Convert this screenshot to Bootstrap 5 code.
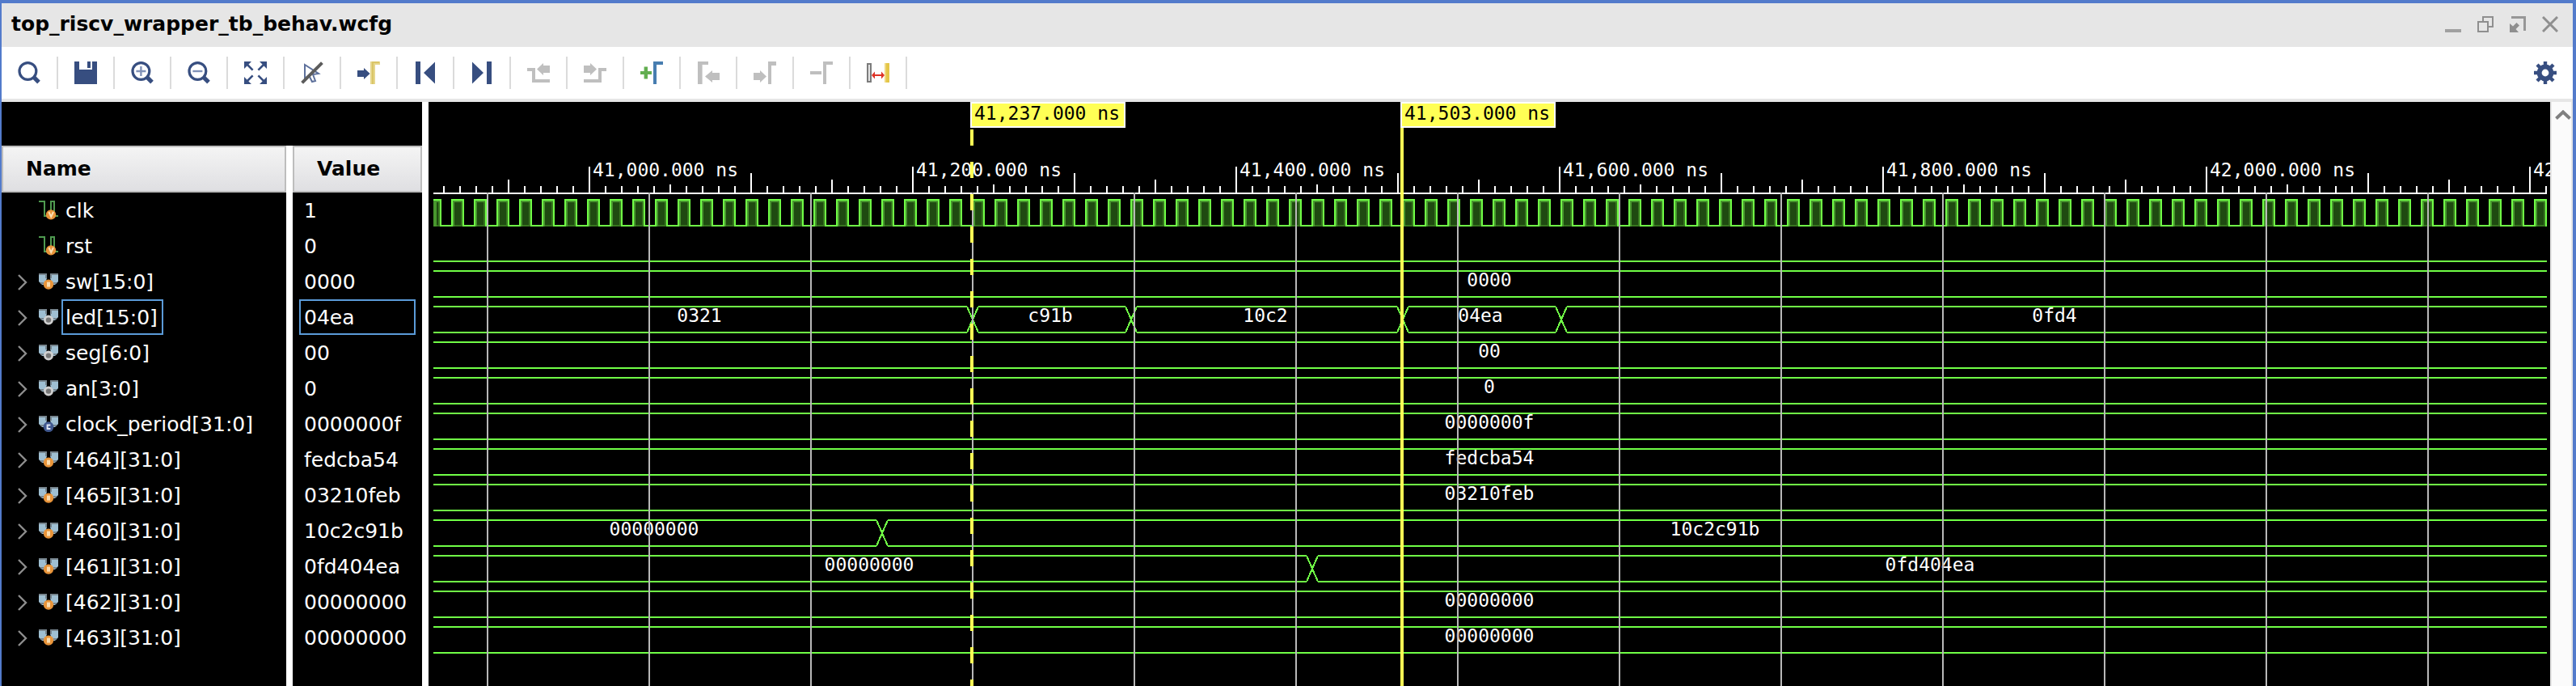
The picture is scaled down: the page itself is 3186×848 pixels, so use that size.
<!DOCTYPE html>
<html lang="en">
<head>
<meta charset="utf-8">
<meta name="viewport" content="width=device-width, initial-scale=1">
<title>top_riscv_wrapper_tb_behav.wcfg</title>
<link rel="stylesheet" href="https://cdn.jsdelivr.net/npm/bootstrap@5.3.0/dist/css/bootstrap.min.css">
<style>
  :root { --navy: #374e80; --frame: #537bcb; --chrome: #e6e6e6; }
  body { font-family: "DejaVu Sans", sans-serif; font-size: 25px; color: #000; background: #000; }
  .window-frame { border: solid var(--frame); border-width: 4px 4px 0 2px; }
  .title-strip { height: 54px; padding: 0 18px 2px 12px; background: var(--chrome); }
  .title-strip h1 { font-size: 25px; font-weight: 700; line-height: 52px; }
  .title-tools { gap: 20px; }
  button { border: 0; background: none; padding: 0; display: block; }
  button svg { display: block; }
  .title-tools svg { width: 20px; height: 20px; }
  .tool-strip { height: 68px; background: #fff; border-bottom: 4px solid var(--chrome); }
  .tool-cell { width: 70px; height: 40px; padding: 6px 20px; border-right: 2px solid #dbdbdb; }
  .tool-strip svg { width: 28px; height: 28px; }
  .settings { margin-right: 20px; }
  .signal-panel { width: 528px; padding-top: 54px; background: #000; border-right: 8px solid #fff; }
  .signal-body { background: linear-gradient(90deg, #000 352px, #fff 352px, #fff 360px, #000 360px); }
  .signal-table { width: 520px; table-layout: fixed; border-collapse: separate; border-spacing: 0; color: #fff; }
  .signal-table th, .signal-table td { padding: 0; }
  .signal-table thead th { height: 58px; padding: 0 28px; line-height: 54px; color: #000; border: 2px solid #bdbdbd;
    background: linear-gradient(#f4f4f4, #dfdfe2); }
  .signal-table thead td { background: #fff; }
  .signal-table tbody th { font-weight: 400; }
  .name-cell { height: 44px; }
  .twisty { width: 46px; height: 44px; padding-left: 20px; }
  .twisty svg { width: 12px; height: 44px; }
  .kind { width: 24px; height: 24px; margin-right: 4px; }
  .label-box { height: 44px; line-height: 38px; padding: 2px 5px 0 3px; border: 2px solid transparent; }
  .value-box { margin: 0 8px; padding-left: 4px; }
  .chosen .label-box { border-color: #5b9bd8; }
  .wave-panel { min-width: 0; min-height: 720px; background: #000; }
  .wave-panel svg { display: block; }
  .wave-panel text { font-family: "DejaVu Sans Mono", monospace; font-size: 23px; fill: #fff; }
  .wave-panel text.flag { fill: #000; }
  .scroll-track { width: 28px; padding: 10px 2px 0 4px; background: #fbfbfb; border: solid var(--chrome); border-width: 0 2px; }
  .scroll-track svg { width: 20px; height: 12px; }
</style>
</head>
<body>
<svg class="d-none" aria-hidden="true">
  <symbol id="k-net" viewBox="0 0 12 12">
    <path d="M0 .5H3.5V9.5H7.5V.5H9.5V9.5H12" fill="none" stroke="#4f9a50"/>
    <circle cx="7.5" cy="8.7" r="3.1" fill="#e8943a"/><path d="M6.2 7l1.4 3 1.4-3" fill="none" stroke="#fbe0b4"/>
  </symbol>
  <symbol id="k-wings" viewBox="0 0 12 12">
    <path d="M0 1H5V4L3.5 8H2L0 6Z M7 1H12V6L10 8H8.500L7 4Z" fill="#9fbfd2"/>
    <path d="M0 1.500H4.500V4 M12 1.500H7.500V4 M1 7H3 M9 7H11" fill="none" stroke="#77858e"/>
  </symbol>
  <symbol id="k-in" viewBox="0 0 12 12"><use href="#k-wings"/><circle cx="6" cy="7.800" r="3.100" fill="#e8943a"/><rect x="5" y="6.300" width="2" height="3" fill="#fbdcae"/></symbol>
  <symbol id="k-out" viewBox="0 0 12 12"><use href="#k-wings"/><circle cx="6" cy="7.800" r="2.300" fill="#777" stroke="#cfcfcf" stroke-width="1.400"/></symbol>
  <symbol id="k-const" viewBox="0 0 12 12"><use href="#k-wings"/><circle cx="6" cy="7.800" r="3.200" fill="#40588f"/><path d="M7.200 6.700H5.300V9H7.200" fill="none" stroke="#dfe6f5"/></symbol>
  <symbol id="chev" viewBox="0 0 12 44"><path d="M1 14l9 9-9 9" fill="none" stroke="#8d8d8d" stroke-width="2.400"/></symbol>
  <symbol id="lens" viewBox="0 0 14 14"><circle cx="6.200" cy="6" r="5.200" fill="none" stroke="#374e80" stroke-width="1.600"/><path d="M10 9.800l3 3" stroke="#374e80" stroke-width="2.600"/></symbol>
</svg>

<main class="window-frame d-flex flex-column min-vh-100">
  <header class="title-strip d-flex align-items-center">
    <h1 class="m-0 flex-grow-1">top_riscv_wrapper_tb_behav.wcfg</h1>
    <div class="title-tools d-flex">
      <button aria-label="Minimize"><svg viewBox="0 0 20 20"><path d="M0 18H20" stroke="#a0a0a0" stroke-width="4"/></svg></button>
      <button aria-label="Restore"><svg viewBox="0 0 20 20" fill="none" stroke="#8f8f8f" stroke-width="2"><path d="M7 6V1H19V13H14"/><rect x="1" y="7" width="12" height="12"/></svg></button>
      <button aria-label="Float"><svg viewBox="0 0 20 20"><path d="M2 1.500H18.500V18" fill="none" stroke="#979797" stroke-width="3"/><path d="M0 9V20H11L7.500 16 12 11.500 8.500 8 4 12.500Z" fill="#8f8f8f"/></svg></button>
      <button aria-label="Close"><svg viewBox="0 0 20 20"><path d="M1 1l18 18M19 1L1 19" stroke="#8f8f8f" stroke-width="3"/></svg></button>
    </div>
  </header>

  <nav class="tool-strip d-flex align-items-center" aria-label="Waveform tools">
    <button class="tool-cell" aria-label="Find"><svg><use href="#lens"/></svg></button>
    <button class="tool-cell" aria-label="Save"><svg viewBox="0 0 14 14" shape-rendering="crispEdges"><path d="M0 0H3V5H11V0H14V14H0ZM8 0H10V4H8Z" fill="#374e80"/></svg></button>
    <button class="tool-cell" aria-label="Zoom in"><svg viewBox="0 0 14 14"><use href="#lens"/><path d="M3.200 6H9.200M6.200 3V9" stroke="#8192b8" stroke-width="1.200"/></svg></button>
    <button class="tool-cell" aria-label="Zoom out"><svg viewBox="0 0 14 14"><use href="#lens"/><path d="M3.200 6H9.200" stroke="#8192b8" stroke-width="1.200"/></svg></button>
    <button class="tool-cell" aria-label="Zoom fit"><svg viewBox="0 0 14 14" fill="#374e80" stroke="#374e80"><path stroke="none" d="M0 0H4.500L0 4.500ZM14 0V4.500L9.500 0ZM0 14V9.500L4.500 14ZM14 14H9.500L14 9.500Z"/><path stroke-width="1.300" d="M1 1L5.300 5.300M13 1L8.700 5.300M1 13L5.300 8.700M13 13L8.700 8.700"/></svg></button>
    <button class="tool-cell" aria-label="Selection off"><svg viewBox="0 0 14 14"><path d="M2.500 2V10.500L5 8.500 7 12.500 9 12 7.500 8 11 7.500Z" fill="none" stroke="#5d709b"/><path d="M.800 13.200L13.200.800" stroke="#5c5c5c" stroke-width="2"/></svg></button>
    <button class="tool-cell" aria-label="Go to cursor"><svg viewBox="0 0 14 14"><path d="M0 5.500H4V4L7.800 7.500 4 11V9.500H0Z" fill="#374e80"/><path d="M8 0H14V2H11V14H8Z" fill="#e6d68c"/><path d="M9 0H13.500V1H10V14H9Z" fill="#dac566"/></svg></button>
    <button class="tool-cell" aria-label="Go to time 0"><svg viewBox="0 0 14 14" fill="#374e80"><path d="M1 0H4V14H1ZM13 .300V13.700L6 7Z"/></svg></button>
    <button class="tool-cell" aria-label="Go to last time"><svg viewBox="0 0 14 14" fill="#374e80"><path d="M10 0H13V14H10ZM1 .300V13.700L8 7Z"/></svg></button>
    <button class="tool-cell" aria-label="Previous transition" disabled><svg viewBox="0 0 14 14" fill="#bfbfbf"><path d="M0 4H5V11H14V13H3V6H0ZM14 2.500V7H10V8.500L6 4.800 10 1V2.500Z"/></svg></button>
    <button class="tool-cell" aria-label="Next transition" disabled><svg viewBox="0 0 14 14" fill="#bfbfbf"><path d="M14 4H9V11H0V13H11V6H14ZM0 2.500V7H4V8.500L8 4.800 4 1V2.500Z"/></svg></button>
    <button class="tool-cell" aria-label="Add marker"><svg viewBox="0 0 14 14"><path d="M0 6H2.300V3.300H4.500V6H7V8H4.500V10.700H2.300V8H0Z" fill="#62ae50"/><path d="M8 0H14V2H10V14H8Z" fill="#477db0"/></svg></button>
    <button class="tool-cell" aria-label="Previous marker" disabled><svg viewBox="0 0 14 14" fill="#bfbfbf"><path d="M.500 0H7V2H3.300V14H.500ZM14 7V11.500H9.500V13L5 9.300 9.500 5.500V7Z"/></svg></button>
    <button class="tool-cell" aria-label="Next marker" disabled><svg viewBox="0 0 14 14" fill="#bfbfbf"><path d="M14 0H9V14H11V2.500H14ZM0 7V11.500H4V13L8 9.300 4 5.500V7Z"/></svg></button>
    <button class="tool-cell" aria-label="Delete marker" disabled><svg viewBox="0 0 14 14" fill="#bfbfbf"><path d="M0 6H7V8H0ZM8 0H14V2H10V14H8Z"/></svg></button>
    <button class="tool-cell" aria-label="Measure"><svg viewBox="0 0 14 14"><rect x=".500" y="1.500" width="2" height="11" fill="#e4e4e4" stroke="#7c7c7c"/><path d="M11 1H14V13H11Z" fill="#e4c648"/><path d="M11 1H12V13H11Z" fill="#efd982"/><path d="M3 8.500L5 6.300V8H9V6.300L11 8.500 9 10.700V9H5V10.700Z" fill="#de3226"/></svg></button>
    <button class="settings ms-auto" aria-label="Settings"><svg viewBox="0 0 14 14" fill="none" stroke="#374e80"><circle cx="7" cy="7" r="3.700" stroke-width="3"/><path stroke-width="2.200" d="M7 0V3M7 11V14M0 7H3M11 7H14M2 2L4 4M10 10L12 12M12 2L10 4M4 10L2 12"/></svg></button>
  </nav>

  <div class="d-flex flex-grow-1">
    <section class="signal-panel flex-shrink-0 d-flex flex-column">
      <div class="signal-body flex-grow-1">
        <table class="signal-table">
          <colgroup><col style="width:352px"><col style="width:8px"><col style="width:160px"></colgroup>
          <thead><tr><th scope="col">Name</th><td></td><th scope="col">Value</th></tr></thead>
          <tbody id="signals"></tbody>
        </table>
      </div>
    </section>
    <section class="wave-panel flex-grow-1 overflow-hidden" id="wave" aria-label="Waveforms"></section>
    <div class="scroll-track flex-shrink-0">
      <button aria-label="Scroll up"><svg viewBox="0 0 20 12"><path d="M1.500 10.500L10 2.500 18.500 10.500" fill="none" stroke="#808080" stroke-width="4"/></svg></button>
    </div>
  </div>
</main>

<script src="https://cdn.jsdelivr.net/npm/bootstrap@5.3.0/dist/js/bootstrap.bundle.min.js"></script>
<script>
  // Each bus lists its values with the x at which the value ends; the last one runs to the edge.
  const signals = [
    { name: 'clk', kind: 'net', value: '1' },
    { name: 'rst', kind: 'net', value: '0' },
    { name: 'sw[15:0]', kind: 'in', value: '0000', bus: [['0000']] },
    { name: 'led[15:0]', kind: 'out', value: '04ea', chosen: true,
      bus: [['0321', 673], ['c91b', 869], ['10c2', 1205], ['04ea', 1401], ['0fd4']] },
    { name: 'seg[6:0]', kind: 'out', value: '00', bus: [['00']] },
    { name: 'an[3:0]', kind: 'out', value: '0', bus: [['0']] },
    { name: 'clock_period[31:0]', kind: 'const', value: '0000000f', bus: [['0000000f']] },
    { name: '[464][31:0]', kind: 'in', value: 'fedcba54', bus: [['fedcba54']] },
    { name: '[465][31:0]', kind: 'in', value: '03210feb', bus: [['03210feb']] },
    { name: '[460][31:0]', kind: 'in', value: '10c2c91b', bus: [['00000000', 561], ['10c2c91b']] },
    { name: '[461][31:0]', kind: 'in', value: '0fd404ea', bus: [['00000000', 1093], ['0fd404ea']] },
    { name: '[462][31:0]', kind: 'in', value: '00000000', bus: [['00000000']] },
    { name: '[463][31:0]', kind: 'in', value: '00000000', bus: [['00000000']] }
  ];

  document.getElementById('signals').innerHTML = signals.map(s => `
    <tr class="${s.chosen ? 'chosen' : ''}">
      <th scope="row"><div class="name-cell d-flex align-items-center">
        ${s.bus ? `<button class="twisty" aria-label="Expand ${s.name}"><svg><use href="#chev"/></svg></button>` : '<span class="twisty"></span>'}
        <svg class="kind"><use href="#k-${s.kind}"/></svg><span class="label-box">${s.name}</span>
      </div></th><td></td>
      <td><div class="label-box value-box">${s.value}</div></td>
    </tr>`).join('');

  const panel = document.getElementById('wave');
  const GREEN = '#70ff46', X0 = 6, AXIS = 112, ROW = 44, PX_PER_NS = 2, T41000 = 198;
  const rect = (x, y, w, h, fill) => `<rect x="${x}" y="${y}" width="${w}" height="${h}" fill="${fill}"/>`;

  function ruler(end) {
    let out = rect(X0, AXIS, end - X0, 2, '#fff');
    for (let n = -9; T41000 + n * 20 < end; n++) {
      const x = T41000 + n * 20, k = ((n % 20) + 20) % 20;
      const h = k === 0 ? 32 : k === 10 ? 24 : k === 15 ? 16 : k === 5 ? 10 : 8;
      out += rect(x, AXIS - h, 2, h, '#fff');
      if (k === 0) out += `<text x="${x + 5}" y="92">${(41000 + n * 20 / PX_PER_NS).toLocaleString('en-US')}.000 ns</text>`;
    }
    return out;
  }

  function clock(end) {
    const y = AXIS + 8;
    let out = rect(X0, y + 32, end - X0, 2, GREEN);
    for (let x = 0; x < end; x += 28) {
      const a = Math.max(x, X0), b = Math.min(x + 16, end);
      if (b - a < 4) continue;
      out += rect(a, y, b - a, 34, GREEN) + rect(x < X0 ? a : a + 2, y + 2, b - a - (x < X0 ? 2 : 4), 32, '#48972e')
           + rect(a + 4, y + 4, b - a - 6, 30, '#37761f') + rect(a + 4, y + 4, b - a - 8, 28, '#1f4a11');
    }
    return out;
  }

  function bus(segments, row, end, width) {
    const top = AXIS + row * ROW + 8, bottom = top + 32, inset = segments.length > 1 ? 2 : 0;
    let out = '', from = 0;
    segments.forEach(([label, stop]) => {
      const a = from ? from + 7 : X0, b = stop ? stop - 7 : end;
      out += rect(a, top, b - a, 2, GREEN) + rect(a, bottom, b - a, 2, GREEN);
      if (stop) out += `<path d="M${stop - 7} ${top + 1}L${stop + 7} ${bottom + 1}M${stop + 7} ${top + 1}L${stop - 7} ${bottom + 1}" stroke="${GREEN}" stroke-width="2"/>`;
      out += `<text text-anchor="middle" x="${Math.round((from + (stop || width)) / 2) - inset}" y="${top + 20}">${label}</text>`;
      from = stop;
    });
    return out;
  }

  function flag(x, label) {
    return rect(x, 0, 192, 32, '#fff') + rect(x + 2, 2, 188, 28, '#ffff55') + `<text class="flag" x="${x + 5}" y="22">${label}</text>`;
  }

  function draw() {
    const w = panel.clientWidth, h = panel.clientHeight, end = w - 4;
    let lines = '', dashes = '';
    for (let x = 72; x < end; x += 200) lines += rect(x, AXIS, 2, h - AXIS, '#b8b8b8');
    for (let y = 34; y < h; y += 40) dashes += rect(670, y, 4, 20, '#ffff55');
    panel.innerHTML = `<svg width="${w}" height="${h}" shape-rendering="crispEdges">`
      + ruler(end) + clock(end) + rect(X0, AXIS + 84, end - X0, 2, GREEN)
      + signals.map((s, i) => s.bus ? bus(s.bus, i, end, w) : '').join('')
      + lines + dashes + rect(1202, 32, 4, h - 32, '#ffff55') + flag(670, '41,237.000 ns') + flag(1202, '41,503.000 ns') + '</svg>';
  }
  draw();
  addEventListener('resize', () => { panel.innerHTML = ''; draw(); });
</script>
</body>
</html>
